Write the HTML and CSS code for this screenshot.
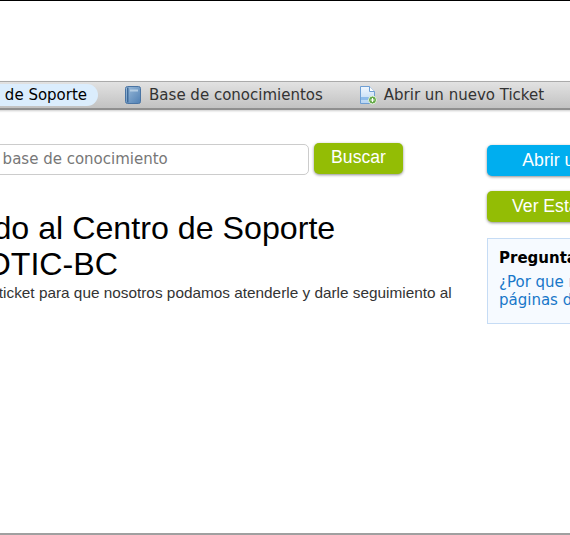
FILE: index.html
```html
<!DOCTYPE html>
<html lang="es">
<head>
    <meta charset="UTF-8">
    <meta name="viewport" content="width=device-width, initial-scale=1.0">
    <title>Centro de Soporte</title>
    <link rel="stylesheet" href="styles.css">
</head>
<body>
    <div class="page">
        <!-- Logo area -->
        <div class="header"></div>

        <!-- Navigation -->
        <ul class="nav">
            <li class="nav-item active"><a href="#">Centro de Soporte</a></li>
            <li class="nav-item">
                <a href="#">
                    <svg class="nav-icon" width="18" height="20" viewBox="0 0 18 20">
                        <defs>
                            <linearGradient id="bookFill" x1="0" y1="0" x2="1" y2="1">
                                <stop offset="0" stop-color="#9dbddb"/>
                                <stop offset="1" stop-color="#4f7fb3"/>
                            </linearGradient>
                        </defs>
                        <rect x="1.5" y="1.5" width="15" height="17" rx="2" fill="url(#bookFill)" stroke="#4a74a3"/>
                        <rect x="3" y="2.5" width="1.5" height="15" fill="#3f6a99"/>
                        <rect x="6" y="4.5" width="8" height="2" fill="#b4cde3"/>
                    </svg>
                    Base de conocimientos
                </a>
            </li>
            <li class="nav-item">
                <a href="#">
                    <svg class="nav-icon" width="17" height="20" viewBox="0 0 17 20">
                        <defs>
                            <linearGradient id="docFill" x1="0" y1="0" x2="0" y2="1">
                                <stop offset="0" stop-color="#f2f8fe"/>
                                <stop offset="1" stop-color="#b5d4f3"/>
                            </linearGradient>
                        </defs>
                        <path d="M0.5 1.5h9l5 5v12h-14z" fill="url(#docFill)" stroke="#6f9fd4"/>
                        <path d="M9.5 1.5v5h5" fill="#fff" stroke="#6f9fd4"/>
                        <rect x="1" y="12" width="10" height="3" fill="#8dbbea"/>
                        <circle cx="12.5" cy="15" r="4" fill="#63a846" stroke="#e8f3e2"/>
                        <path d="M10.5 15h4M12.5 13v4" stroke="#fff" stroke-width="1.2"/>
                    </svg>
                    Abrir un nuevo Ticket
                </a>
            </li>
        </ul>

        <!-- Main Content -->
        <div class="content">
            <div class="main">
                <form class="search">
                    <input type="text" class="search-input" placeholder="Buscar en la base de conocimiento">
                    <button type="button" class="btn btn-green search-btn">Buscar</button>
                </form>
                <h1>Bienvenido al Centro de Soporte de la TI OTIC-BC</h1>
                <p>Por favor abra un ticket para que nosotros podamos atenderle y darle seguimiento al</p>
            </div>

            <!-- Sidebar -->
            <div class="sidebar">
                <button type="button" class="btn btn-blue">Abrir un nuevo Ticket</button>
                <button type="button" class="btn btn-green">Ver Estado de un Ticket</button>
                <div class="faq">
                    <h3>Preguntas Frecuentes</h3>
                    <a href="#">¿Por que no puedo ver las páginas de soporte?</a>
                </div>
            </div>
        </div>

        <div class="footer"></div>
    </div>
</body>
</html>
```

FILE: styles.css
```css
/* General Styling */
html, body {
    margin: 0;
    padding: 0;
    height: 535px;
    overflow: hidden;
    background-color: #fff;
}

body {
    font-family: 'Liberation Sans', Arial, sans-serif;
    color: #333;
}

a {
    text-decoration: none;
}

/* The shot is taken scrolled sideways, so the page starts left of the window */
.page {
    width: 960px;
    height: 535px;
    margin-left: -185px;
    display: flex;
    flex-direction: column;
    border-top: 1px solid #000;
    box-sizing: border-box;
}

.header {
    height: 80px;
}

/* Navigation */
.nav {
    list-style: none;
    margin: 0;
    padding: 0 0 0 124px;
    height: 26px;
    display: flex;
    align-items: center;
    border-top: 1px solid #aaa;
    border-bottom: 2px solid #8f8f8f;
    background: linear-gradient(#e2e2e2, #c2c2c2);
    box-shadow: 0 1px 2px rgba(0, 0, 0, 0.2);
    font-family: 'DejaVu Sans', sans-serif;
    font-size: 15px;
}

.nav-item {
    margin-right: 15px;
}

.nav-item a {
    display: flex;
    align-items: center;
    gap: 7px;
    height: 22px;
    padding: 0 11px;
    color: #333;
}

.nav-item.active a {
    color: #000;
    background-color: #dbedfd;
    border-radius: 11px;
}

/* Content */
.content {
    flex: 1;
    display: flex;
    padding-top: 33px;
}

.main {
    width: 672px;
}

.search {
    display: flex;
    gap: 5px;
    margin-left: 81px;
    align-items: flex-start;
}

.search-input {
    width: 413px;
    height: 31px;
    box-sizing: border-box;
    margin-top: 1px;
    padding: 0 8px 1px;
    border: 1px solid #ccc;
    border-radius: 5px;
    font-family: 'DejaVu Sans', sans-serif;
    font-size: 15px;
}

.search-input::placeholder {
    color: #777;
}

.btn {
    display: block;
    width: 236px;
    height: 31px;
    border: none;
    border-radius: 5px;
    color: #fff;
    font-family: 'Liberation Sans', Arial, sans-serif;
    font-size: 17.6px;
    box-shadow: 0 1px 3px rgba(0, 0, 0, 0.45);
}

.btn-green {
    background-color: #93bd05;
}

.btn-blue {
    background-color: #00aeef;
}

.search-btn {
    width: 89px;
    padding-bottom: 3px;
}

h1 {
    margin: 35px 0 0 55px;
    width: 500px;
    font-size: 32.2px;
    line-height: 36px;
    font-weight: normal;
    color: #000;
}

.main p {
    margin: 2px 0 0 61px;
    font-size: 15.35px;
    line-height: 18px;
    white-space: nowrap;
}

/* Sidebar */
.sidebar {
    width: 250px;
    display: flex;
    flex-direction: column;
    align-items: flex-start;
    gap: 15px;
    margin-top: 2px;
}

.faq {
    width: 241px;
    box-sizing: border-box;
    padding: 10px 11px 14px;
    margin-top: 1px;
    background-color: #f6faff;
    border: 1px solid #c6dcf5;
    font-family: 'DejaVu Sans', sans-serif;
    font-size: 15px;
    line-height: 18px;
}

.faq h3 {
    margin: 0 0 6px;
    font-size: 15px;
    color: #000;
}

.faq a {
    color: #1877c9;
}

.footer {
    height: 2px;
    background-color: #a0a0a0;
}
```
